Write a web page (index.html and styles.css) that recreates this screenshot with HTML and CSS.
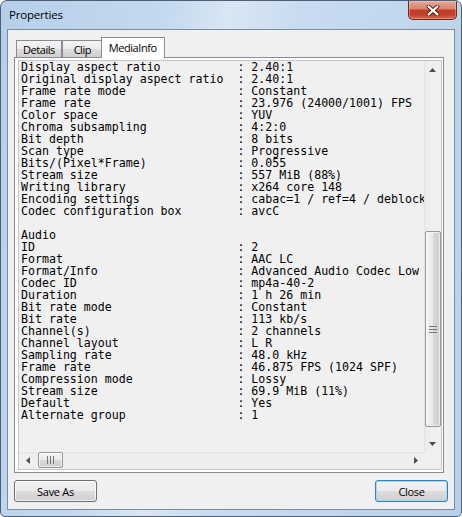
FILE: index.html
```html
<!DOCTYPE html>
<html lang="en">
<head>
    <meta charset="UTF-8">
    <title>Properties</title>
    <link rel="stylesheet" href="styles.css">
</head>
<body>
    <div class="window">
        <div class="titlebar">
            <span class="title">Properties</span>
            <div class="close-x">
                <svg width="14" height="11" viewBox="0 0 14 11">
                    <path d="M2.5 1.5 L11.5 9.5 M11.5 1.5 L2.5 9.5" stroke="#5a2218" stroke-width="4" stroke-linecap="round"/>
                    <path d="M2.5 1.5 L11.5 9.5 M11.5 1.5 L2.5 9.5" stroke="#ffffff" stroke-width="2.2" stroke-linecap="round"/>
                </svg>
            </div>
        </div>
        <div class="client">
            <div class="tabs">
                <div class="tab">Details</div>
                <div class="tab">Clip</div>
                <div class="tab active">MediaInfo</div>
            </div>
            <div class="pane">
                <div class="edit">
<pre class="info">Display aspect ratio           : 2.40:1
Original display aspect ratio  : 2.40:1
Frame rate mode                : Constant
Frame rate                     : 23.976 (24000/1001) FPS
Color space                    : YUV
Chroma subsampling             : 4:2:0
Bit depth                      : 8 bits
Scan type                      : Progressive
Bits/(Pixel*Frame)             : 0.055
Stream size                    : 557 MiB (88%)
Writing library                : x264 core 148
Encoding settings              : cabac=1 / ref=4 / deblock
Codec configuration box        : avcC

Audio
ID                             : 2
Format                         : AAC LC
Format/Info                    : Advanced Audio Codec Low
Codec ID                       : mp4a-40-2
Duration                       : 1 h 26 min
Bit rate mode                  : Constant
Bit rate                       : 113 kb/s
Channel(s)                     : 2 channels
Channel layout                 : L R
Sampling rate                  : 48.0 kHz
Frame rate                     : 46.875 FPS (1024 SPF)
Compression mode               : Lossy
Stream size                    : 69.9 MiB (11%)
Default                        : Yes
Alternate group                : 1</pre>
                    <div class="vscroll">
                        <div class="arrow">
                            <svg width="7" height="4" viewBox="0 0 7 4"><path d="M0 4 L3.5 0 L7 4 Z" fill="#4d4d4d"/></svg>
                        </div>
                        <div class="vtrack">
                            <div class="vthumb">
                                <svg width="8" height="7" viewBox="0 0 8 7">
                                    <path d="M0 0.5 H8 M0 3.5 H8 M0 6.5 H8" stroke="#777" stroke-width="1"/>
                                </svg>
                            </div>
                        </div>
                        <div class="arrow">
                            <svg width="7" height="4" viewBox="0 0 7 4"><path d="M0 0 L3.5 4 L7 0 Z" fill="#4d4d4d"/></svg>
                        </div>
                    </div>
                    <div class="hscroll">
                        <div class="arrow">
                            <svg width="4" height="7" viewBox="0 0 4 7"><path d="M4 0 L0 3.5 L4 7 Z" fill="#4d4d4d"/></svg>
                        </div>
                        <div class="htrack">
                            <div class="hthumb">
                                <svg width="7" height="8" viewBox="0 0 7 8">
                                    <path d="M0.5 0 V8 M3.5 0 V8 M6.5 0 V8" stroke="#777" stroke-width="1"/>
                                </svg>
                            </div>
                        </div>
                        <div class="arrow">
                            <svg width="4" height="7" viewBox="0 0 4 7"><path d="M0 0 L4 3.5 L0 7 Z" fill="#4d4d4d"/></svg>
                        </div>
                    </div>
                    <div class="corner"></div>
                </div>
            </div>
            <div class="buttons">
                <button class="btn save">Save As</button>
                <button class="btn close">Close</button>
            </div>
        </div>
    </div>
</body>
</html>
```

FILE: styles.css
```css
body {
    margin: 0;
    font-family: "Open Sans", "Noto Sans", sans-serif;
    font-size: 11px;
}
.window {
    width: 462px;
    height: 517px;
    box-sizing: border-box;
    border: 1px solid #4d5f75;
    border-radius: 7px 7px 5px 5px;
    background: linear-gradient(100deg, #b6cfe9 0%, #c4d9ef 30%, #d9e6f4 42%, #c8dbf0 55%, #bad1ea 100%);
    display: flex;
    flex-direction: column;
    overflow: hidden;
}
.titlebar {
    height: 28px;
    display: flex;
    justify-content: space-between;
    align-items: flex-start;
    padding: 0 4px 0 8px;
}
.title {
    margin-top: 7px;
    line-height: 14px;
    font-size: 11.5px;
    letter-spacing: -0.2px;
    color: #000;
}
.close-x {
    width: 47px;
    height: 18px;
    border: 1px solid #6b2a1f;
    border-top: none;
    border-radius: 0 0 5px 5px;
    background: linear-gradient(#e6a898 0%, #d9846f 42%, #c33d26 52%, #bf3f28 75%, #d66a4f 100%);
    box-shadow: inset 0 0 0 1px rgba(255, 220, 210, 0.35);
    display: flex;
    align-items: center;
    justify-content: center;
}
.client {
    flex: 1;
    margin: 0 6px 6px 6px;
    border: 1px solid #7a8ca2;
    background: #f0f0f0;
    display: flex;
    flex-direction: column;
}
.tabs {
    display: flex;
    align-items: flex-start;
    height: 21px;
    margin: 7px 0 -1px 8px;
    position: relative;
    z-index: 1;
}
.tab {
    box-sizing: border-box;
    height: 17px;
    min-width: 41px;
    margin-top: 3px;
    padding: 0 6px;
    border: 1px solid #898c95;
    border-bottom: none;
    background: linear-gradient(#f3f3f3, #ebebeb 50%, #dddddd 50%, #cfcfcf);
    text-align: center;
    line-height: 17px;
    letter-spacing: -0.45px;
    color: #000;
}
.tab.active {
    height: 21px;
    margin: 0 -2px 0 -2px;
    padding: 0 7px;
    background: #fff;
    line-height: 19px;
}
.pane {
    height: 416px;
    box-sizing: border-box;
    margin: 0 10px 0 6px;
    border: 1px solid #898c95;
    background: #fff;
    padding: 2px 1px 2px 3px;
    display: flex;
}
.edit {
    flex: 1;
    min-width: 0;
    border: 1px solid #c4c7cc;
    background: #f0f0f0;
    display: grid;
    grid-template-columns: 1fr 17px;
    grid-template-rows: 1fr 17px;
}
.info {
    margin: 0;
    padding: 0 0 0 2px;
    font-family: "DejaVu Sans Mono", monospace;
    font-size: 11.6px;
    line-height: 12px;
    white-space: pre;
    overflow: hidden;
    color: #000;
}
.vscroll {
    display: flex;
    flex-direction: column;
    background: linear-gradient(to right, #e2e2e2, #eeeeee 2px, #f0f0f0);
}
.hscroll {
    display: flex;
    background: linear-gradient(#e2e2e2, #eeeeee 2px, #f0f0f0);
}
.arrow {
    flex: 0 0 17px;
    height: 17px;
    display: flex;
    align-items: center;
    justify-content: center;
}
.vtrack {
    flex: 1;
}
.vthumb {
    margin: 153px 0 0 1px;
    height: 196px;
    box-sizing: border-box;
    border: 1px solid #979797;
    border-radius: 2px;
    background: linear-gradient(to right, #f4f4f4, #e8e8e8 50%, #d9d9d9 50%, #cdcdcd);
    box-shadow: inset 0 0 0 1px rgba(255, 255, 255, 0.6);
    display: flex;
    align-items: center;
    justify-content: center;
}
.htrack {
    flex: 1;
}
.hthumb {
    margin: 0 0 0 2px;
    width: 25px;
    height: 16px;
    box-sizing: border-box;
    border: 1px solid #979797;
    border-radius: 2px;
    background: linear-gradient(#f4f4f4, #e8e8e8 50%, #d9d9d9 50%, #cdcdcd);
    box-shadow: inset 0 0 0 1px rgba(255, 255, 255, 0.6);
    display: flex;
    align-items: center;
    justify-content: center;
}
.corner {
    background: #f0f0f0;
}
.buttons {
    display: flex;
    justify-content: space-between;
    margin: 7px 6px 0 6px;
}
.btn {
    box-sizing: border-box;
    height: 22px;
    padding: 0;
    border: 1px solid #707070;
    border-radius: 3px;
    background: linear-gradient(#f2f2f2, #ebebeb 50%, #dddddd 50%, #cfcfcf);
    box-shadow: inset 0 0 0 1px rgba(255, 255, 255, 0.7);
    font-family: "Open Sans", "Noto Sans", sans-serif;
    font-size: 11px;
    letter-spacing: -0.3px;
    color: #000;
}
.save {
    width: 83px;
}
.close {
    width: 73px;
    border-color: #3c7fb1;
    box-shadow: inset 0 0 0 1px #9ddcf7;
}
```
